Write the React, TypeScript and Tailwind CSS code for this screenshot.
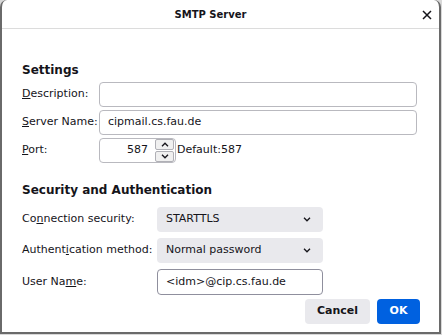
import React from "react";

const font = { fontFamily: '"DejaVu Sans", "Liberation Sans", sans-serif' };

function Chevron({ up }: { up?: boolean }) {
  return (
    <svg width="8" height="5" viewBox="0 0 8 5" className="block">
      <path
        d={up ? "M1 4.2 L4 1.2 L7 4.2" : "M1 0.8 L4 3.8 L7 0.8"}
        fill="none"
        stroke="#15141a"
        strokeWidth="1.3"
      />
    </svg>
  );
}

function Select({ value }: { value: string }) {
  return (
    <div className="h-[25px] w-[166px] rounded-[4px] bg-[#e9e9ed] flex items-center justify-between pl-[9px] pr-[12px] text-[11px] text-[#15141a]">
      <span>{value}</span>
      <Chevron />
    </div>
  );
}

export default function App() {
  return (
    <div className="w-[442px] h-[335px] bg-[#d8d8d8] overflow-hidden" style={font}>
      <div className="w-[441px] h-[334px] bg-white border-l-2 border-r-2 border-b-2 border-[#6a6a6a] rounded-t-[7px] flex flex-col text-[#15141a]">
        {/* title bar */}
        <div className="h-[29px] border-b border-[#dcdcdc] flex items-center relative">
          <div className="flex-1 text-center text-[10px] font-bold pr-[20px] pt-[1px]">SMTP Server</div>
          <svg width="10" height="10" viewBox="0 0 10 10" className="absolute left-[420px] top-[10px]">
            <path d="M1 1 L9 9 M9 1 L1 9" stroke="#15141a" strokeWidth="1.5" />
          </svg>
        </div>

        <div className="pl-[20px] pr-[19px] flex flex-col">
          <div className="mt-[33px] text-[12px] font-bold leading-[16px]">Settings</div>

          <div className="mt-[4px] grid grid-cols-[77px_1fr] gap-y-[3px] items-center text-[11px]">
            <div><span className="underline">D</span>escription:</div>
            <div className="h-[25px] w-[318px] border border-[#b9b9bf] rounded-[4px]" />
            <div><span className="underline">S</span>erver Name:</div>
            <div className="h-[25px] w-[318px] border border-[#b9b9bf] rounded-[4px] flex items-center pl-[8px] text-[11px]">
              cipmail.cs.fau.de
            </div>
            <div><span className="underline">P</span>ort:</div>
            <div className="flex items-center">
              <div className="h-[25px] w-[77px] border border-[#b9b9bf] rounded-[4px] flex items-center justify-end pr-[1px]">
                <span className="mr-[7px]">587</span>
                <div className="flex flex-col gap-[1px]">
                  <div className="w-[19px] h-[11px] border border-[#b0b0b6] rounded-[2px] bg-[#f0f0f0] flex items-center justify-center">
                    <Chevron up />
                  </div>
                  <div className="w-[19px] h-[11px] border border-[#b0b0b6] rounded-[2px] bg-[#f0f0f0] flex items-center justify-center">
                    <Chevron />
                  </div>
                </div>
              </div>
              <span className="ml-[1px]">Default:587</span>
            </div>
          </div>

          <div className="mt-[19px] text-[12px] font-bold leading-[16px]">Security and Authentication</div>

          <div className="mt-[9px] grid grid-cols-[135px_1fr] gap-y-[6px] items-center text-[11px]">
            <div>Co<span className="underline">n</span>nection security:</div>
            <Select value="STARTTLS" />
            <div>Authent<span className="underline">i</span>cation method:</div>
            <Select value="Normal password" />
            <div>User Na<span className="underline">m</span>e:</div>
            <div className="h-[26px] w-[166px] border border-[#8f8f9d] rounded-[4px] flex items-center pl-[8px]">
              &lt;idm&gt;@cip.cs.fau.de
            </div>
          </div>

          <div className="mt-[4px] flex justify-end gap-[7px]">
            <div className="h-[25px] w-[65px] rounded-[4px] bg-[#e9e9ed] flex items-center justify-center text-[11px] font-bold">
              Cancel
            </div>
            <div className="h-[25px] w-[43px] rounded-[4px] bg-[#0061e0] text-white flex items-center justify-center text-[11px] font-bold">
              OK
            </div>
          </div>
        </div>
      </div>
    </div>
  );
}
